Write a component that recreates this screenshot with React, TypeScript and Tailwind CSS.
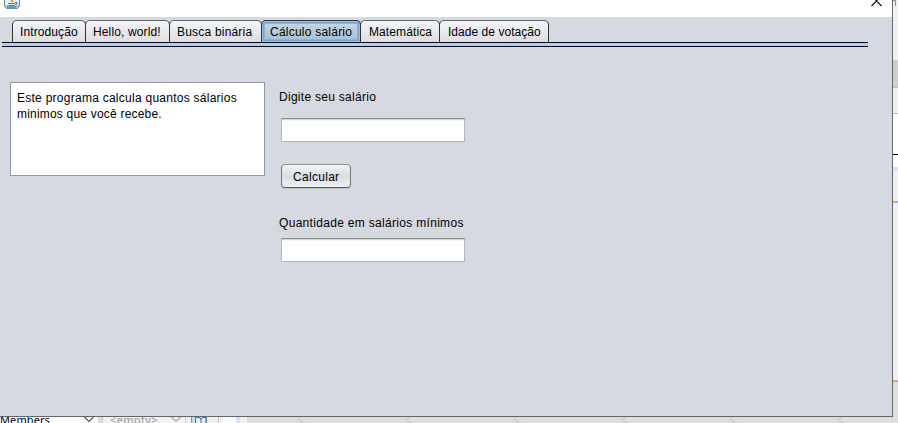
import { useState } from 'react';

const tabs = [
  { label: 'Introdução', width: 'w-[74px]', tracking: 'tracking-[0.1px]', pad: 'pl-[7px]' },
  { label: 'Hello, world!', width: 'w-[85px]', tracking: 'tracking-[0.13px]', pad: 'pl-[7px]' },
  { label: 'Busca binária', width: 'w-[93px]', tracking: 'tracking-[0.2px]', pad: 'pl-[7px]' },
  { label: 'Cálculo salário', width: 'w-[100px]', tracking: 'tracking-[0.23px]', pad: 'pl-[8px]' },
  { label: 'Matemática', width: 'w-[80px]', tracking: 'tracking-[0.1px]', pad: 'pl-[8px]' },
  { label: 'Idade de votação', width: 'w-[110px]', tracking: 'tracking-[0.04px]', pad: 'pl-[8px]' },
];

function JavaIcon() {
  return (
    <svg className="ml-1 block h-[9px] w-4" viewBox="0 0 16 9">
      <path d="M.5 0v6.5l2 2h11l2-2V0" fill="#e7f0f5" stroke="#668fae" />
      <path d="M1 5v1.5L2.5 8h11L15 6.500V5" fill="#a5c0d1" />
      <path d="M7 0l1.500 1L7 2" fill="none" stroke="#ee8a2a" strokeWidth="1.500" />
      <path d="M4 3.500h7M5 5.500h5M3 7h9M11 2.500h2v1.500l-2 1" fill="none" stroke="#467797" />
    </svg>
  );
}

function TitleBar() {
  return (
    <div className="flex h-[17px] justify-between bg-white">
      <JavaIcon />
      <svg className="mr-[10px] block h-[7px] w-[11px]" viewBox="0 0 11 7">
        <path d="M.5 6L5.500 1l5 5M4.500 0l1 1 1-1" fill="none" stroke="#111" strokeWidth="1.200" />
      </svg>
    </div>
  );
}

function TabBar({ active, onSelect }: { active: number; onSelect: (i: number) => void }) {
  return (
    <div className="pt-[3px]">
      <div className="flex h-[22px] pl-3">
        {tabs.map((tab, i) => (
          <button
            key={tab.label}
            onClick={() => onSelect(i)}
            className={`h-[22px] shrink-0 rounded-t-[5px] border border-b-0 text-left whitespace-nowrap ${tab.width} ${tab.tracking} ${tab.pad} ${i ? '-ml-px' : ''} ${
              i === active
                ? 'border-[#263749] bg-linear-to-b from-[#c9d8e4] to-[#a3bfd3] shadow-[inset_0_0_0_1px_#a5bfd4,inset_0_0_0_2px_#73a4d1,inset_0_0_0_3px_#8fb3d4]'
                : 'border-t-[#62656c] border-r-[#30333c] border-l-[#30333c] bg-linear-to-b from-[#f4f5f7] to-[#dcdee3]'
            }`}
          >
            {tab.label}
          </button>
        ))}
      </div>
      <div className="ml-[2px] h-[5px] w-[866px] border-y border-[#060a20] bg-[#b9cce0]" />
    </div>
  );
}

function Field({ label }: { label: string }) {
  return (
    <input
      aria-label={label}
      className="ml-[2px] block h-6 w-[184px] border border-[#b5b6b9] border-t-[#8d8e91] bg-white px-1.5 shadow-[inset_0_1px_0_#d2d3d5,inset_0_2px_0_#f3f3f3] outline-none"
    />
  );
}

function SalaryPanel() {
  return (
    <div className="flex pt-[35px] pl-[10px]">
      <div className="h-[94px] w-[255px] border border-[#9297a1] bg-white pt-[7px] pl-[6px] leading-4">
        <p className="tracking-[0.26px]">Este programa calcula quantos sálarios</p>
        <p className="tracking-[0.2px]">minimos que você recebe.</p>
      </div>
      <div className="ml-[14px] flex flex-col items-start whitespace-nowrap">
        <label className="mt-[7px] h-4 leading-4 tracking-[0.28px]">Digite seu salário</label>
        <div className="mt-[13px]"><Field label="Salário" /></div>
        <button className="mt-[22px] ml-[2px] h-6 w-[70px] rounded-[4px] border border-t-[#8e9196] border-r-[#74777e] border-b-[#55585f] border-l-[#74777e] bg-linear-to-b from-[#f6f6f8] via-[#dadce1] to-[#f0f1f4] pt-[2px] pl-[11px] text-left tracking-[0.3px] shadow-[0_1px_0_#bfc3cb]">
          Calcular
        </button>
        <label className="mt-[27px] h-4 leading-4 tracking-[0.31px]">Quantidade em salários mínimos</label>
        <div className="mt-[7px]"><Field label="Quantidade" /></div>
      </div>
    </div>
  );
}

function SideStrip() {
  return (
    <div className="flex w-[5px] flex-col overflow-hidden bg-[#f1f1f1]">
      <svg className="block h-[60px] w-[5px] shrink-0" viewBox="0 0 5 60">
        <path d="M0 .5h2.500V6" fill="none" stroke="#888" />
      </svg>
      <div className="h-[28px] shrink-0 border-b border-[#bcbcbc] bg-[#cecece]" />
      <div className="h-[26px] shrink-0 border-b border-[#bcbcbc]" />
      <div className="h-[41px] shrink-0 border-b border-black bg-white" />
      <div className="h-3 shrink-0 bg-white" />
      <div className="h-1 shrink-0 bg-[#dedfff]" />
      <div className="h-[30px] shrink-0" />
      <div className="h-px shrink-0 bg-[#e8a52e]" />
      <div className="h-px shrink-0 bg-[#bcbcbc]" />
      <div className="h-[177px] shrink-0" />
      <div className="h-px shrink-0 bg-[#bcbcbc]" />
      <div className="h-px shrink-0 bg-[#e8a52e]" />
      <div className="h-[35px] shrink-0 bg-[#dedede]" />
    </div>
  );
}

function Chevron({ color }: { color: string }) {
  return (
    <svg className="block h-[6px] w-[10px] shrink-0" viewBox="0 0 10 6">
      <path d="M.5 0L5 4.500 9.500 0" fill="none" stroke={color} strokeWidth="1.200" />
    </svg>
  );
}

const notches = [297, 405, 513, 621, 729, 837];

function EditorStrip() {
  return (
    <div className="flex h-[6px] overflow-hidden bg-[#dedede]">
      <div className="flex h-[6px] w-[98px] shrink-0 justify-between bg-white pr-[4px]">
        <span className="-mt-[5px] font-['Noto_Sans'] text-[11px] leading-4 tracking-[0.1px]">Members</span>
        <Chevron color="#555" />
      </div>
      <div className="ml-1 flex h-[6px] w-[84px] shrink-0 justify-between border-x border-[#ccc] bg-[#f1f1f1] pr-[4px] pl-[7px] text-[#999]">
        <span className="-mt-[5px] font-['Noto_Sans'] text-[11px] leading-4 tracking-[0.35px]">&lt;empty&gt;</span>
        <Chevron color="#aaa" />
      </div>
      <svg className="block h-[6px] w-[37px] shrink-0" viewBox="0 0 37 6">
        <path d="M0 0h37v6H0z" fill="#efefef" />
        <path d="M5.500 0v6M20.500 0v6" stroke="#7899b5" />
        <path d="M6 0h14v6H6z" fill="#cbdce9" />
        <path d="M9.500 6V.5H13l2 1.500 2-1.500h3V6M15 2v4" fill="#e8f0f7" stroke="#416d9b" />
        <path d="M32.500 0v6" stroke="#c6c6c6" />
      </svg>
      <div className="h-[6px] w-[13px] shrink-0 bg-white" />
      <div className="h-[6px] w-1 shrink-0 bg-[#dedfff]" />
      <div className="h-[6px] w-[7px] shrink-0 bg-[#eeeeee]" />
      <svg className="block h-[6px] w-[651px] shrink-0" viewBox="247 0 651 6">
        {notches.map((x) => (
          <path key={x} d={`M${x + 5} 0l-4.500 2.500 7 3.500`} fill="none" stroke="#c4c4c4" />
        ))}
      </svg>
    </div>
  );
}

export default function App() {
  const [active, setActive] = useState(3);
  return (
    <div className="h-[423px] w-[898px] overflow-hidden font-['Liberation_Sans',Arial,sans-serif] text-[12px] text-black">
      <div className="flex h-[417px]">
        <main className="h-[417px] w-[893px] shrink-0 border-r border-b border-[#64666b] bg-[#d6d9e0]">
          <TitleBar />
          <TabBar active={active} onSelect={setActive} />
          <SalaryPanel />
        </main>
        <SideStrip />
      </div>
      <EditorStrip />
    </div>
  );
}
